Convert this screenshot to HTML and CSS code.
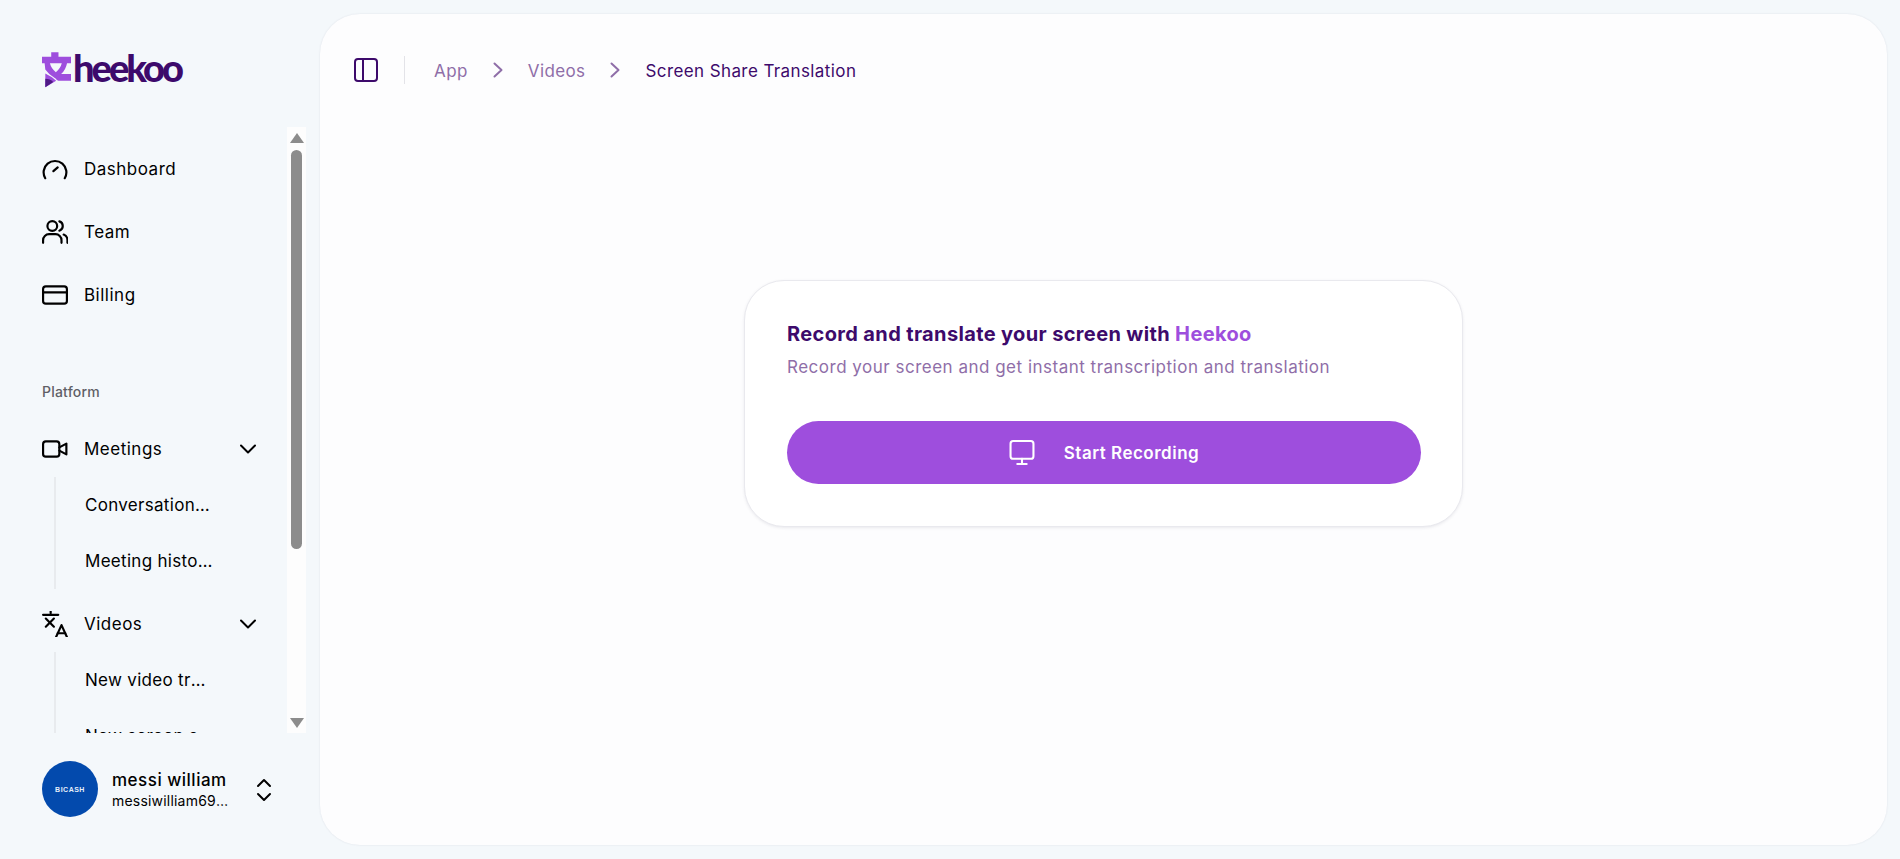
FILE: index.html
```html
<!doctype html>
<html lang="en">

<head>
  <meta charset="utf-8">
  <title>Screen Share Translation</title>
  <meta name="viewport" content="width=device-width, initial-scale=1">
  <link rel="stylesheet" href="styles.css">
</head>

<body>
  <div class="app">
    <aside class="sidebar">
      <a class="logo" href="#">
        <svg class="logo-mark" viewBox="12 12 88 107">
          <path fill="#9e4edd" fill-rule="evenodd" d="M40 12h22v13h38v20h-12q-4 20-18 33h30v20h-38q-6-2-8-6-8-5-20-14l-12-14-2-19h-8v-20h28zM36 45q4 16 18 27 14-11 18-27z" />
          <path fill="#9e4edd" d="M22 76q18 8 33 22l-33 20z" />
          <path fill="#4f1a86" d="M22 92q15 0 24 10l-24 16z" />
        </svg>
        <span class="logo-text">heekoo</span>
      </a>

      <div class="nav-wrap">
        <nav class="nav">
          <a class="nav-row" href="#">
            <svg class="ico" viewBox="0 0 24 24"><path d="M3 20.500a10.500 10.500 0 1 1 18 0" /><path d="M10.500 14l4-3.500" /></svg>
            <span class="nav-label">Dashboard</span>
          </a>
          <a class="nav-row" href="#">
            <svg class="ico" viewBox="0 0 24 24"><circle cx="9.500" cy="6.500" r="4.500" /><path d="M1 22v-2.500a5.500 5.500 0 0 1 5.500-5.500h6a5.500 5.500 0 0 1 5.500 5.500v2.500" /><path d="M16 2.200a4.500 4.500 0 0 1 0 8.600" /><path d="M20 14.400a5.500 5.500 0 0 1 3.500 5.100v2.500" /></svg>
            <span class="nav-label">Team</span>
          </a>
          <a class="nav-row" href="#">
            <svg class="ico" viewBox="0 0 24 24"><rect x="1" y="4" width="22" height="16" rx="2.500" /><path d="M1 9.500h22" /></svg>
            <span class="nav-label">Billing</span>
          </a>

          <p class="nav-title">Platform</p>

          <a class="nav-row" href="#">
            <svg class="ico" viewBox="0 0 24 24"><rect x="1" y="5" width="15" height="14" rx="2.500" /><path d="M16 10.500l6.500-3.500v10l-6.500-3.500" /></svg>
            <span class="nav-label">Meetings</span>
            <svg class="chev" viewBox="0 0 16 10"><path d="M1 1.500l7 7 7-7" /></svg>
          </a>
          <div class="sub">
            <a class="sub-row" href="#">Conversation mode</a>
            <a class="sub-row" href="#">Meeting history</a>
          </div>

          <a class="nav-row" href="#">
            <svg class="ico" viewBox="0 0 24 24"><path d="M1 3.500h14" /><path d="M8 .5v1.500" /><path d="M3.500 7l7.500 7.500" /><path d="M11 7l-7.500 7.500" /><path d="M13 24l5-11 5 11" /><path d="M14.500 20.500h7" /></svg>
            <span class="nav-label">Videos</span>
            <svg class="chev" viewBox="0 0 16 10"><path d="M1 1.500l7 7 7-7" /></svg>
          </a>
          <div class="sub">
            <a class="sub-row" href="#">New video translation</a>
            <a class="sub-row" href="#">New screen share</a>
          </div>
        </nav>

        <div class="bar">
          <span class="bar-up"></span>
          <span class="bar-thumb"></span>
          <span class="bar-down"></span>
        </div>
      </div>

      <div class="user">
        <div class="avatar">BICASH</div>
        <div class="user-info">
          <div class="user-name">messi william</div>
          <div class="user-mail">messiwilliam69@gmail.com</div>
        </div>
        <svg class="updown" viewBox="0 0 16 24"><path d="M2 8l6-6 6 6" /><path d="M2 16l6 6 6-6" /></svg>
      </div>
    </aside>

    <main class="main">
      <header class="top">
        <svg class="panel-ico" viewBox="0 0 24 24"><rect x="1" y="1" width="22" height="22" rx="3" /><path d="M9 1v22" /></svg>
        <span class="top-line"></span>
        <a class="crumb" href="#">App</a>
        <svg class="crumb-sep" viewBox="0 0 10 16"><path d="M1.500 1.500l7 6.500-7 6.500" /></svg>
        <a class="crumb" href="#">Videos</a>
        <svg class="crumb-sep" viewBox="0 0 10 16"><path d="M1.500 1.500l7 6.500-7 6.500" /></svg>
        <span class="crumb crumb-now">Screen Share Translation</span>
      </header>

      <section class="card">
        <h1 class="card-title">Record and translate your screen with <span class="accent">Heekoo</span></h1>
        <p class="card-sub">Record your screen and get instant transcription and translation</p>
        <button class="start" type="button">
          <svg class="start-ico" viewBox="0 0 24 24"><rect x="1" y="1" width="22" height="17" rx="2.500" /><path d="M12 18v4" /><path d="M7.500 23h9" /></svg>
          <span>Start Recording</span>
        </button>
      </section>
    </main>
  </div>
</body>

</html>
```

FILE: styles.css
```css
* {
  padding: 0;
  margin: 0;
  box-sizing: border-box;
}

html,
body {
  height: 100%;
}

body {
  background: #f4f8fb;
  color: #000;
  font-family: Inter, "Noto Sans", sans-serif;
  font-size: 17px;
  letter-spacing: .5px;
  overflow: hidden;
}

a {
  color: inherit;
  text-decoration: none;
}

svg {
  fill: none;
  stroke: currentColor;
  stroke-width: 2;
  stroke-linecap: round;
  stroke-linejoin: round;
  flex: none;
}

.app {
  display: flex;
  height: 859px;
}

/* sidebar */
.sidebar {
  width: 320px;
  flex: none;
  display: flex;
  flex-direction: column;
  padding-left: 42px;
}

.logo {
  height: 127px;
  padding-top: 52px;
  display: flex;
  align-items: flex-start;
}

.logo-mark {
  width: 29px;
  height: 36px;
  stroke: none;
}

.logo-text {
  color: #3d0a6b;
  font-family: Lato, sans-serif;
  font-size: 38px;
  font-weight: 900;
  line-height: 30px;
  letter-spacing: -3px;
  margin-left: 2px;
}

.nav-wrap {
  position: relative;
  width: 264px;
  height: 606px;
}

.nav {
  height: 100%;
  padding-top: 14px;
  overflow: hidden;
}

.nav-row {
  display: flex;
  align-items: center;
  height: 56px;
  margin-bottom: 7px;
  width: 214px;
}

.ico {
  width: 26px;
  height: 26px;
}

.nav-label {
  margin-left: 16px;
  flex: 1;
}

.chev {
  width: 16px;
  height: 10px;
}

.nav-title {
  margin-top: 60px;
  height: 38px;
  font-size: 14px;
  font-weight: 500;
  letter-spacing: .2px;
  color: #5f5f66;
}

.sub {
  margin: -7px 0 7px 12px;
  padding-left: 29px;
  border-left: 2px solid #e8ebee;
}

.sub-row {
  display: block;
  width: 128px;
  height: 56px;
  line-height: 56px;
  letter-spacing: .3px;
  white-space: nowrap;
  overflow: hidden;
  text-overflow: ellipsis;
}

/* scrollbar drawn over the list, the real one doesn't show up here */
.bar {
  position: absolute;
  top: 0;
  right: 0;
  width: 19px;
  height: 606px;
  background: #fdfdfd;
}

.bar-up,
.bar-down {
  position: absolute;
  left: 2.500px;
  border-left: 7px solid transparent;
  border-right: 7px solid transparent;
}

.bar-up {
  top: 6px;
  border-bottom: 10px solid #8c8c8c;
}

.bar-down {
  bottom: 5px;
  border-top: 10px solid #8c8c8c;
}

.bar-thumb {
  position: absolute;
  top: 23px;
  left: 4px;
  width: 11px;
  height: 399px;
  border-radius: 6px;
  background: #8c8c8c;
}

.user {
  height: 126px;
  padding-top: 28px;
  display: flex;
  align-items: flex-start;
}

.avatar {
  width: 56px;
  height: 56px;
  flex: none;
  border-radius: 50%;
  background: #034aad;
  color: #e6eefa;
  font-family: "Liberation Sans", sans-serif;
  font-size: 7px;
  font-weight: 700;
  letter-spacing: .5px;
  text-align: center;
  line-height: 58px;
}

.user-info {
  width: 118px;
  margin: 7px 0 0 14px;
}

.user-name {
  font-size: 17px;
  font-weight: 500;
  line-height: 24px;
  white-space: nowrap;
}

.user-mail {
  font-size: 14px;
  letter-spacing: .2px;
  line-height: 18px;
  white-space: nowrap;
  overflow: hidden;
  text-overflow: ellipsis;
}

.updown {
  width: 16px;
  height: 24px;
  margin: 17px 0 0 26px;
}

/* main panel */
.main {
  width: 1567px;
  height: 831px;
  margin-top: 14px;
  background: #fdfdfe;
  border-radius: 40px;
  box-shadow: 0 0 2px rgba(60, 60, 90, .12);
}

.top {
  display: flex;
  align-items: center;
  height: 28px;
  margin-top: 42px;
  padding-left: 34px;
}

.panel-ico {
  width: 24px;
  height: 24px;
  color: #3d0a6b;
}

.top-line {
  width: 1px;
  height: 28px;
  margin: 0 29px 0 26px;
  background: #e3e3e8;
}

.crumb {
  font-size: 17px;
  letter-spacing: .4px;
  color: #8f6ea8;
  padding-top: 2px;
}

.crumb-now {
  color: #3d0a6b;
}

.crumb-sep {
  width: 10px;
  height: 16px;
  margin: 0 25px;
  color: #8f6ea8;
}

.card {
  width: 719px;
  height: 247px;
  margin: 0 auto;
  position: relative;
  top: 196px;
  padding: 41px 42px 0;
  background: #fff;
  border: 1px solid #e9e9ee;
  border-radius: 40px;
  box-shadow: 0 1px 3px rgba(60, 60, 90, .1);
}

.card-title {
  font-size: 20px;
  font-weight: 700;
  line-height: 24px;
  letter-spacing: .36px;
  color: #3d0a6b;
}

.accent {
  color: #9e4edd;
}

.card-sub {
  margin-top: 9px;
  font-size: 17px;
  line-height: 24px;
  color: #8f6ea8;
}

.start {
  display: flex;
  align-items: center;
  justify-content: center;
  gap: 29px;
  width: 634px;
  height: 63px;
  margin-top: 42px;
  border: 0;
  border-radius: 32px;
  background: #9e4edd;
  color: #fff;
  font-family: inherit;
  font-size: 17px;
  font-weight: 600;
  letter-spacing: .5px;
}

.start-ico {
  width: 26px;
  height: 25px;
}
```
